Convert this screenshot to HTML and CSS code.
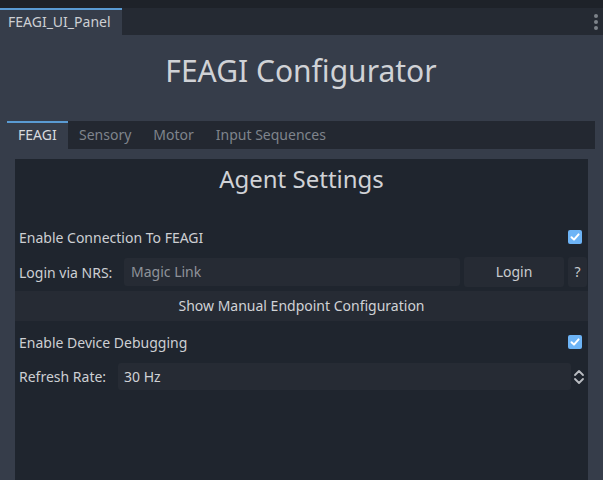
FILE: index.html
```html
<!DOCTYPE html>
<html>
<head>
<meta charset="utf-8">
<link rel="stylesheet" href="styles.css">
</head>
<body>
<div class="topstrip"></div>
<div class="dockbar">
  <div class="docktab">FEAGI_UI_Panel</div>
  <div class="dockfill"></div>
  <div class="kebab"><span></span><span></span><span></span></div>
</div>
<div class="main">
  <h1 class="title">FEAGI Configurator</h1>
  <div class="tabs">
    <div class="tab active">FEAGI</div>
    <div class="tab">Sensory</div>
    <div class="tab">Motor</div>
    <div class="tab">Input Sequences</div>
  </div>
  <div class="panel">
    <div class="heading">Agent Settings</div>
    <div class="row row-check first">
      <span class="label">Enable Connection To FEAGI</span>
      <span class="check"><svg width="14" height="14" viewBox="0 0 14 14"><path d="M3.5 7.2 L6 9.6 L10.6 4.4" fill="none" stroke="#fff" stroke-width="2" stroke-linecap="round" stroke-linejoin="round"/></svg></span>
    </div>
    <div class="row row-login">
      <span class="label lbl-login">Login via NRS:</span>
      <div class="edit">Magic Link</div>
      <div class="btn btn-login">Login</div>
      <div class="btn btn-q">?</div>
    </div>
    <div class="wide-btn">Show Manual Endpoint Configuration</div>
    <div class="row row-check second">
      <span class="label">Enable Device Debugging</span>
      <span class="check"><svg width="14" height="14" viewBox="0 0 14 14"><path d="M3.5 7.2 L6 9.6 L10.6 4.4" fill="none" stroke="#fff" stroke-width="2" stroke-linecap="round" stroke-linejoin="round"/></svg></span>
    </div>
    <div class="row row-refresh">
      <span class="label lbl-refresh">Refresh Rate:</span>
      <div class="spin">30 Hz</div>
      <div class="arrows"><svg width="12" height="16" viewBox="0 0 12 16"><path d="M2 6 L6 2 L10 6 M2 10 L6 14 L10 10" fill="none" stroke="#b9bcc1" stroke-width="1.8" stroke-linecap="round" stroke-linejoin="round"/></svg></div>
    </div>
  </div>
</div>
</body>
</html>
```
FILE: styles.css
```css
* { box-sizing: border-box; }
html, body { margin: 0; padding: 0; }
body {
  width: 603px;
  height: 480px;
  overflow: hidden;
  background: #363d4a;
  font-family: "Noto Sans", "Open Sans", sans-serif;
  font-size: 14px;
  color: #cdcfd3;
}
.topstrip { height: 8px; background: #1e2229; }
.dockbar { display: flex; height: 27px; background: #252a33; }
.docktab {
  width: 122px;
  background: #363d4a;
  border-top: 2px solid #5a9bd3;
  color: #cdcfd3;
  font-size: 14px;
  line-height: 24px;
  padding-left: 8px;
}
.dockfill { flex: 1; }
.kebab { width: 10px; display: flex; flex-direction: column; align-items: center; gap: 2px; padding-top: 6px; margin-right: 2px; }
.kebab span { width: 4px; height: 4px; border-radius: 50%; background: #7d828a; }
.main { padding: 0 8px 0 7px; }
.title {
  margin: 0;
  height: 86px;
  font-size: 30px;
  font-weight: normal;
  text-align: center;
  line-height: 72px;
  color: #d0d2d6;
}
.tabs { display: flex; height: 28px; background: #232831; width: 588px; }
.tab {
  padding: 0 11px;
  line-height: 28px;
  color: #7f848c;
  font-size: 14px;
}
.tab.active {
  width: 61px;
  background: #363d4a;
  border-top: 2px solid #5a9bd3;
  line-height: 24px;
  color: #d8dadd;
}
.panel {
  margin: 10px 0 0 8px;
  width: 573px;
  height: 330px;
  background: #1f252e;
  padding: 0 0 0 4px;
}
.heading {
  height: 40px;
  line-height: 40px;
  text-align: center;
  font-size: 24px;
  color: #d0d2d6;
  margin-left: -4px;
}
.row { display: flex; align-items: center; }
.row-check { height: 26px; justify-content: space-between; padding-right: 6px; }
.row-check.first { margin-top: 25px; }
.row-check.second { margin-top: 8px; }
.check {
  width: 14px; height: 14px;
  background: #6db4f6;
  border-radius: 2px;
  display: block;
}
.check svg { display: block; }
.row-login { height: 30px; margin-top: 7px; }
.lbl-login { width: 105px; }
.edit {
  width: 336px; height: 28px;
  background: #262b34;
  border-radius: 3px;
  line-height: 28px;
  padding-left: 7px;
  color: #8f939a;
}
.btn {
  height: 30px;
  background: #262b34;
  border-radius: 3px;
  line-height: 30px;
  text-align: center;
  color: #c9cbcf;
}
.btn-login { width: 100px; margin-left: 4px; }
.btn-q { width: 19px; margin-left: 4px; }
.wide-btn {
  margin: 4px 0 0 -4px;
  height: 30px;
  background: #262b34;
  line-height: 30px;
  text-align: center;
  color: #d0d2d6;
}
.row-refresh { height: 27px; margin-top: 8px; }
.lbl-refresh { width: 99px; }
.spin {
  width: 453px; height: 27px;
  background: #262b34;
  border-radius: 3px;
  line-height: 27px;
  padding-left: 6px;
  color: #d0d2d6;
}
.arrows { width: 16px; display: flex; justify-content: center; }
.arrows svg { display: block; }
```
